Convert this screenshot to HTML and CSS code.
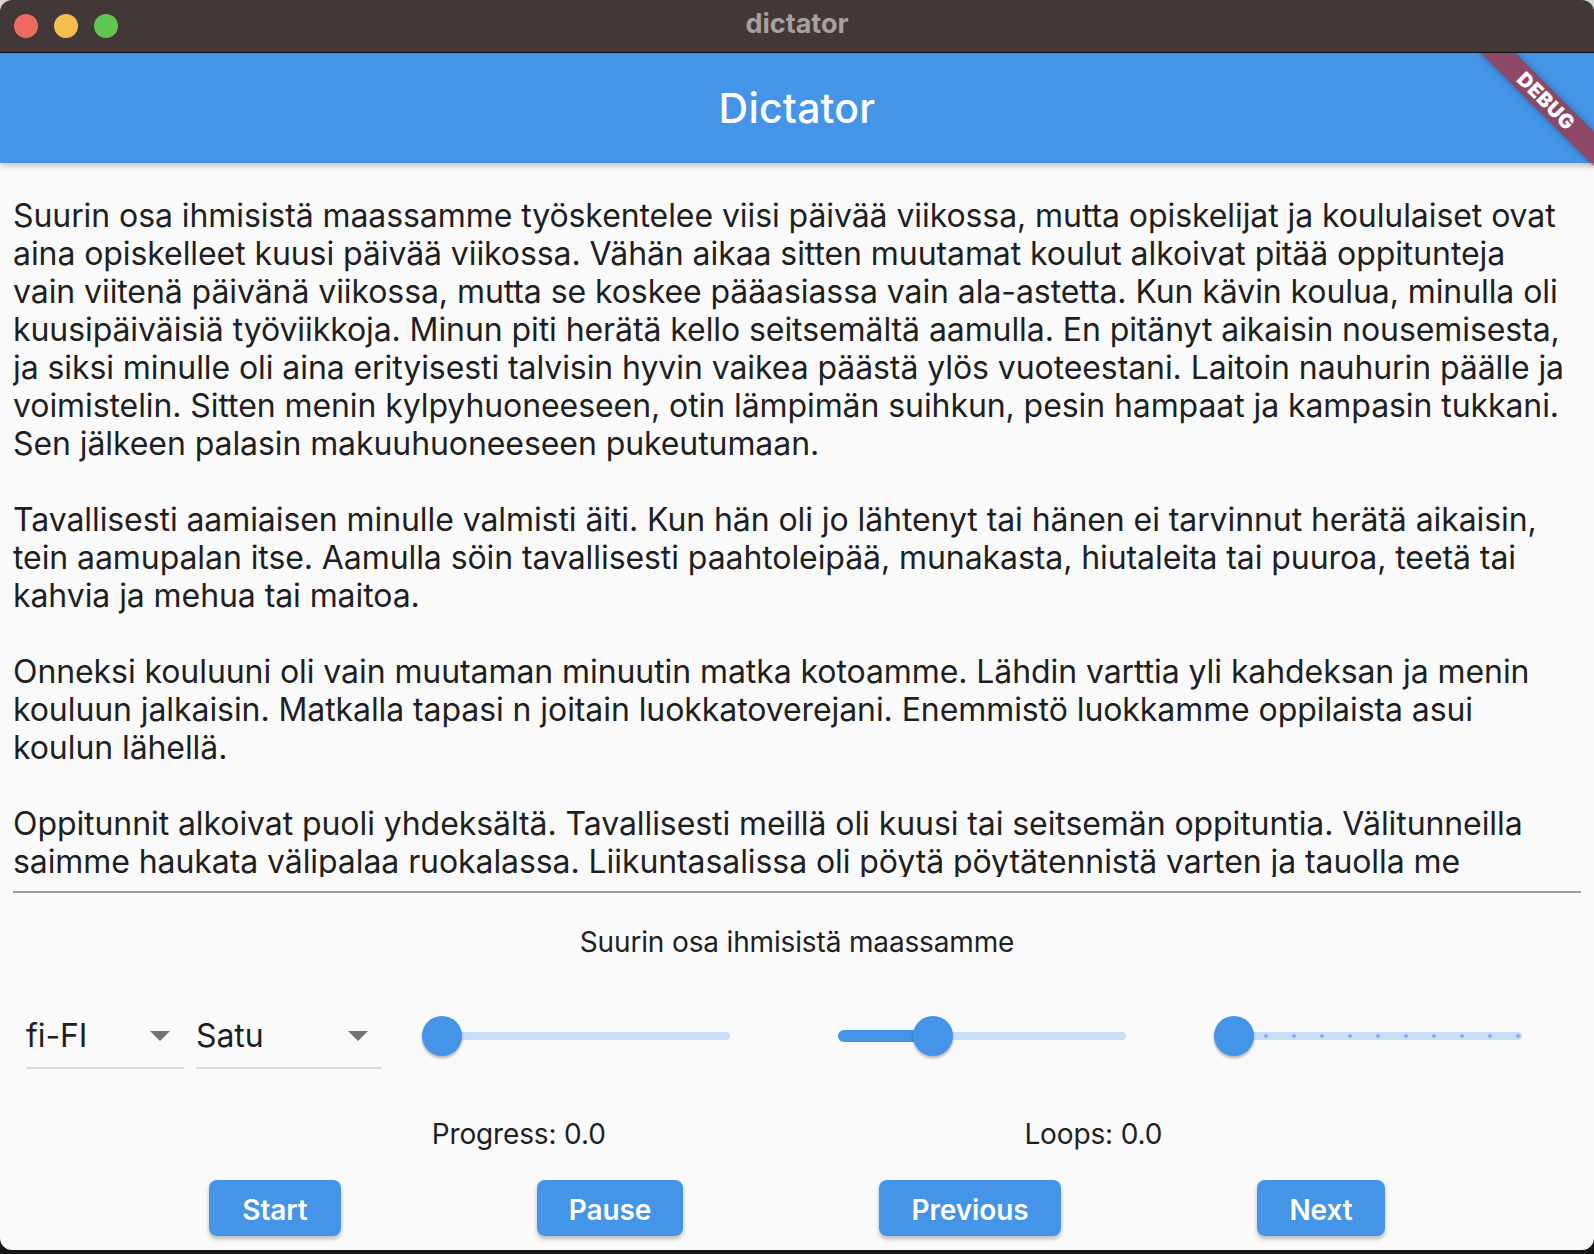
FILE: index.html
```html
<!DOCTYPE html>
<html lang="fi">
<head>
<meta charset="utf-8">
<title>dictator</title>
<link rel="stylesheet" href="styles.css">
</head>
<body>
<div class="window">
  <div class="titlebar">
    <div class="lights">
      <span class="light red"></span>
      <span class="light yellow"></span>
      <span class="light green"></span>
    </div>
    <div class="wintitle">dictator</div>
  </div>
  <div class="app">
    <header class="appbar"><h1 class="apptitle">Dictator</h1></header>
    <div class="debug-wrap"><div class="debug">DEBUG</div></div>
    <main class="content">
      <div class="text-area">
        <p class="para">Suurin osa ihmisistä maassamme työskentelee viisi päivää viikossa, mutta opiskelijat ja koululaiset ovat<br>aina opiskelleet kuusi päivää viikossa. Vähän aikaa sitten muutamat koulut alkoivat pitää oppitunteja<br>vain viitenä päivänä viikossa, mutta se koskee pääasiassa vain ala-astetta. Kun kävin koulua, minulla oli<br>kuusipäiväisiä työviikkoja. Minun piti herätä kello seitsemältä aamulla. En pitänyt aikaisin nousemisesta,<br>ja siksi minulle oli aina erityisesti talvisin hyvin vaikea päästä ylös vuoteestani. Laitoin nauhurin päälle ja<br>voimistelin. Sitten menin kylpyhuoneeseen, otin lämpimän suihkun, pesin hampaat ja kampasin tukkani.<br>Sen jälkeen palasin makuuhuoneeseen pukeutumaan.</p>
        <p class="para">Tavallisesti aamiaisen minulle valmisti äiti. Kun hän oli jo lähtenyt tai hänen ei tarvinnut herätä aikaisin,<br>tein aamupalan itse. Aamulla söin tavallisesti paahtoleipää, munakasta, hiutaleita tai puuroa, teetä tai<br>kahvia ja mehua tai maitoa.</p>
        <p class="para">Onneksi kouluuni oli vain muutaman minuutin matka kotoamme. Lähdin varttia yli kahdeksan ja menin<br>kouluun jalkaisin. Matkalla tapasi n joitain luokkatoverejani. Enemmistö luokkamme oppilaista asui<br>koulun lähellä.</p>
        <p class="para">Oppitunnit alkoivat puoli yhdeksältä. Tavallisesti meillä oli kuusi tai seitsemän oppituntia. Välitunneilla<br>saimme haukata välipalaa ruokalassa. Liikuntasalissa oli pöytä pöytätennistä varten ja tauolla me</p>
      </div>
      <div class="divider"></div>
      <div class="current">Suurin osa ihmisistä maassamme</div>
      <div class="controls">
        <div class="dropdown dd-lang"><span class="dd-value">fi-FI</span><span class="dd-arrow"></span></div>
        <div class="dropdown dd-voice"><span class="dd-value">Satu</span><span class="dd-arrow"></span></div>
        <div class="sliders">
          <div class="slider">
            <div class="track">
              <div class="thumb" style="left:0%"></div>
            </div>
          </div>
          <div class="slider">
            <div class="track">
              <div class="active" style="width:33%"></div>
              <div class="thumb" style="left:33%"></div>
            </div>
          </div>
          <div class="slider">
            <div class="track">
              <div class="ticks">
                <span class="tick"></span><span class="tick"></span><span class="tick"></span><span class="tick"></span><span class="tick"></span><span class="tick"></span><span class="tick"></span><span class="tick"></span><span class="tick"></span><span class="tick"></span><span class="tick"></span>
              </div>
              <div class="thumb" style="left:0%"></div>
            </div>
          </div>
        </div>
      </div>
      <div class="status">
        <span class="status-item">Progress: 0.0</span>
        <span class="status-item">Loops: 0.0</span>
      </div>
      <div class="buttons">
        <button class="btn btn-start">Start</button>
        <button class="btn btn-pause">Pause</button>
        <button class="btn btn-prev">Previous</button>
        <button class="btn btn-next">Next</button>
      </div>
    </main>
  </div>
</div>
</body>
</html>
```
FILE: styles.css
```css
html, body {
  margin: 0;
  padding: 0;
}
html {
  background: linear-gradient(#d6d6d6 0, #d6d6d6 50%, #151515 50%, #151515 100%);
}
body {
  width: 1594px;
  height: 1254px;
  overflow: hidden;
  font-family: Inter, "Noto Sans", sans-serif;
}
.window {
  width: 1594px;
  height: 1250px;
  border-radius: 12px;
  overflow: hidden;
  background: #fafafa;
  display: flex;
  flex-direction: column;
}
.titlebar {
  height: 52px;
  flex: none;
  background: #413837;
  border-bottom: 1px solid #0d0b0b;
  display: flex;
  align-items: center;
  position: relative;
}
.lights {
  display: flex;
  gap: 16px;
  padding-left: 14px;
}
.light {
  width: 24px;
  height: 24px;
  border-radius: 50%;
  display: block;
}
.red { background: #ed6a5e; }
.yellow { background: #f5bf4f; }
.green { background: #61c554; }
.wintitle {
  position: absolute;
  left: 0;
  right: 0;
  top: 0;
  height: 47px;
  line-height: 47px;
  text-align: center;
  color: #a8a09f;
  font-weight: 700;
  font-size: 27px;
  letter-spacing: 0;
}
.app {
  flex: 1;
  position: relative;
  display: flex;
  flex-direction: column;
  min-height: 0;
}
.appbar {
  height: 110px;
  flex: none;
  background: #4494e8;
  box-shadow: 0 3px 6px rgba(0,0,0,0.22);
  display: flex;
  align-items: center;
  justify-content: center;
  position: relative;
  z-index: 2;
}
.apptitle {
  margin: 0;
  color: #ffffff;
  font-size: 41px;
  font-weight: 500;
  letter-spacing: 0.2px;
}
.debug-wrap {
  position: absolute;
  top: 0;
  right: 0;
  width: 200px;
  height: 200px;
  overflow: hidden;
  z-index: 5;
  pointer-events: none;
}
.debug {
  position: absolute;
  left: 71.9px;
  top: 36.1px;
  width: 160px;
  height: 24px;
  line-height: 24px;
  transform: rotate(45deg);
  background: rgba(183, 28, 28, 0.63);
  box-shadow: 0 0 6px rgba(0,0,0,0.35);
  color: #ffffff;
  font-size: 20px;
  font-weight: 900;
  text-align: center;
  letter-spacing: 0.5px;
}
.content {
  flex: 1;
  display: flex;
  flex-direction: column;
  padding: 0 13px;
  color: #1f1f1f;
}
.text-area {
  height: 680px;
  padding-top: 34px;
  overflow: hidden;
  flex: none;
}
.para {
  margin: 0 0 38px 0;
  font-size: 32px;
  line-height: 38px;
  white-space: nowrap;
  letter-spacing: -0.08px;
}
.divider {
  margin-top: 14px;
  height: 2px;
  background: #9e9e9e;
  flex: none;
}
.current {
  margin-top: 32px;
  height: 34px;
  line-height: 34px;
  font-size: 28px;
  text-align: center;
  letter-spacing: -0.15px;
}
.controls {
  margin-top: 29px;
  height: 96px;
  display: flex;
  align-items: center;
  padding-left: 13px;
  margin-right: -1px;
  flex: none;
}
.dropdown {
  height: 96px;
  box-sizing: border-box;
  display: flex;
  align-items: center;
  justify-content: space-between;
  position: relative;
  padding-right: 14px;
}
.dropdown::after {
  content: "";
  position: absolute;
  left: 0;
  right: 0;
  top: 79px;
  height: 2px;
  background: #dcdcdc;
}
.dd-lang { width: 158px; }
.dd-voice { width: 186px; margin-left: 12px; }
.dd-value {
  font-size: 32px;
  letter-spacing: -0.1px;
  margin-top: -2px;
}
.dd-arrow {
  width: 0;
  height: 0;
  border-left: 10px solid transparent;
  border-right: 10px solid transparent;
  border-top: 10px solid #737373;
}
.sliders {
  flex: 1;
  display: flex;
  margin-left: 12px;
}
.slider {
  flex: 1;
  height: 96px;
  padding: 0 60px 0 48px;
  display: flex;
  align-items: center;
}
.track {
  flex: 1;
  height: 8px;
  border-radius: 4px;
  background: #c8dff7;
  position: relative;
}
.active {
  position: absolute;
  left: 0;
  top: -2px;
  height: 12px;
  border-radius: 6px 0 0 6px;
  background: #4494e8;
}
.thumb {
  position: absolute;
  top: 50%;
  width: 40px;
  height: 40px;
  margin: -20px 0 0 -20px;
  border-radius: 50%;
  background: #4494e8;
  box-shadow: 0 2px 3px rgba(0,0,0,0.3);
}
.ticks {
  position: absolute;
  left: 0;
  right: 0;
  top: 0;
  bottom: 0;
  padding: 0 2px;
  display: flex;
  align-items: center;
  justify-content: space-between;
}
.tick {
  width: 4px;
  height: 4px;
  border-radius: 50%;
  background: #7db3ee;
}
.status {
  margin-top: 33px;
  height: 34px;
  line-height: 34px;
  display: flex;
  justify-content: space-evenly;
  font-size: 28px;
  letter-spacing: -0.15px;
  flex: none;
}
.buttons {
  margin-top: 29px;
  display: flex;
  justify-content: space-evenly;
  flex: none;
}
.btn {
  height: 56px;
  border: none;
  border-radius: 8px;
  background: #4494e8;
  color: #ffffff;
  font-family: Inter, "Noto Sans", sans-serif;
  font-size: 28px;
  font-weight: 600;
  letter-spacing: -0.1px;
  padding: 0;
  padding-top: 3px;
  box-shadow: 0 3px 4px rgba(0,0,0,0.25);
}
.btn-start { width: 132px; }
.btn-pause { width: 146px; }
.btn-prev { width: 182px; }
.btn-next { width: 128px; }
```
